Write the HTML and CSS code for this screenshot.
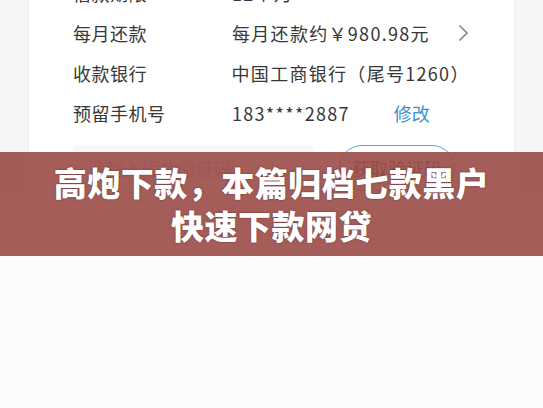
FILE: index.html
```html
<html lang="zh-CN">
<head>
  <meta charset="UTF-8">
  <title>高炮下款</title>
  <link rel="stylesheet" href="styles.css">
</head>
<body>

  <div class="pagina">
    <div class="cartao">
      <div class="linha">
        <span class="rotulo">借款期限</span>
        <span class="valor">12个月</span>
      </div>
      <div class="linha">
        <span class="rotulo">每月还款</span>
        <span class="valor">每月还款约￥980.98元</span>
        <svg class="seta" width="11" height="18" viewBox="0 0 11 18">
          <path d="M1.5 1.5 L9 9 L1.5 16.5" fill="none" stroke="#8a8a8a" stroke-width="1.7"/>
        </svg>
      </div>
      <div class="linha">
        <span class="rotulo">收款银行</span>
        <span class="valor">中国工商银行（尾号1260）</span>
      </div>
      <div class="linha">
        <span class="rotulo">预留手机号</span>
        <span class="valor">183****2887</span>
        <a class="editar">修改</a>
      </div>

      <div class="codigo">
        <div class="campo">请输入短信验证码</div>
        <div class="botao">获取验证码</div>
      </div>
    </div>
  </div>

  <div class="faixa">
    <h1>高炮下款，本篇归档七款黑户<br>快速下款网贷</h1>
  </div>

</body>
</html>
```

FILE: styles.css
```css
* { box-sizing: border-box; }
body, html {
  margin: 0;
  height: 100%;
  overflow: hidden;
  background: #fbfbfb;
  font-family: "Noto Sans CJK SC", "Noto Sans", sans-serif;
}

.pagina {
  position: relative;
  height: 100%;
  background: linear-gradient(#f6f6f6 0, #f6f6f6 230px, #fcfcfc 260px);
}

.cartao {
  margin: -35px 29px 0;
  padding: 8px 45px 29px 44px;
  background: #fff;
  border-radius: 6px;
  box-shadow: 0 1px 6px rgba(0, 0, 0, 0.04);
}

.linha {
  display: flex;
  align-items: center;
  height: 40px;
  font-size: 18px;
  color: #383838;
}

.rotulo {
  width: 159px;
  letter-spacing: 0.5px;
}

.valor {
  letter-spacing: 1.3px;
}

.seta {
  margin-left: auto;
}

.editar {
  margin-left: 44px;
  color: #3b8fcb;
}

.codigo {
  display: flex;
  gap: 25px;
  margin-top: 12px;
}

.campo {
  width: 241px;
  height: 46px;
  padding: 0 15px;
  line-height: 46px;
  font-size: 18px;
  color: #b8b8b8;
  background: #f7f7f7;
  border-radius: 4px;
}

.botao {
  width: 116px;
  height: 46px;
  line-height: 44px;
  text-align: center;
  font-size: 18px;
  color: #555;
  border: 1px solid #4fa7dc;
  border-radius: 23px;
}

.faixa {
  position: absolute;
  top: 152px;
  left: 0;
  right: 0;
  height: 104px;
  display: flex;
  align-items: center;
  justify-content: center;
  background: rgba(155, 75, 72, 0.9);
}

.faixa h1 {
  margin: 0;
  text-align: center;
  font-size: 33px;
  line-height: 43px;
  font-weight: 900;
  color: #fff;
  letter-spacing: 0.5px;
  text-shadow: 0 0 2px rgba(60, 20, 20, 0.6);
}
```
